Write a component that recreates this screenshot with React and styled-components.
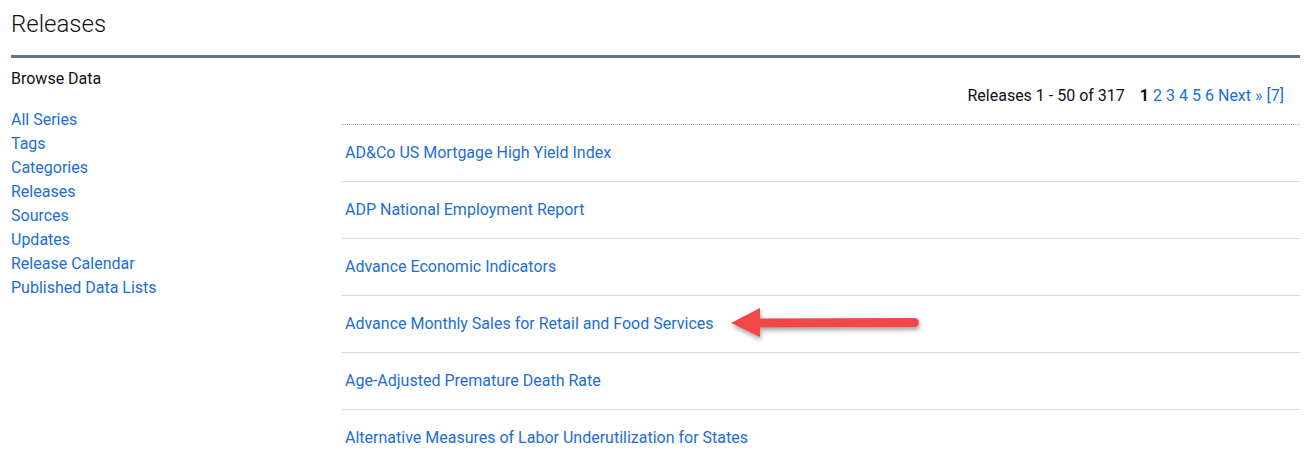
import React from "react";
import styled, { createGlobalStyle } from "styled-components";

const Global = createGlobalStyle`
  html, body { margin: 0; padding: 0; background: #fff; }
  body { font-family: Roboto, "Liberation Sans", Arial, sans-serif; color: #111; }
  a { color: #1c6ed6; text-decoration: none; }
`;

const Page = styled.div`
  padding: 0 7px 0 11px;
  position: relative;
`;

const Title = styled.h1`
  margin: 0;
  padding-top: 10px;
  height: 55px;
  box-sizing: border-box;
  font-size: 24px;
  font-weight: 300;
  line-height: 28px;
  color: #111;
`;

const Rule = styled.div`
  height: 3px;
  background: #5b7a90;
`;

const Body = styled.div`
  display: grid;
  grid-template-columns: 330px 1fr;
`;

const Sidebar = styled.nav`
  display: flex;
  flex-direction: column;
  padding-top: 12px;
`;

const SideHeading = styled.div`
  font-size: 16px;
  line-height: 18px;
  color: #111;
  margin-bottom: 20px;
`;

const SideLink = styled.a`
  font-size: 16px;
  line-height: 24px;
`;

const Main = styled.div`
  display: flex;
  flex-direction: column;
`;

const Pager = styled.div`
  display: flex;
  justify-content: flex-end;
  align-items: flex-start;
  gap: 4px;
  padding: 26px 16px 0 0;
  height: 67px;
  box-sizing: border-box;
  border-bottom: 1px dotted #aaa;
  font-size: 16px;
  line-height: 24px;
`;

const Count = styled.span`
  margin-right: 11px;
`;

const Current = styled.b`
  font-weight: 700;
`;

const Row = styled.div`
  height: 57px;
  box-sizing: border-box;
  display: flex;
  align-items: center;
  padding: 0 0 2px 4px;
  border-bottom: ${(p) => (p.$last ? "none" : "1px solid #ddd")};
  font-size: 16px;
`;

const Arrow = styled.svg`
  position: absolute;
  left: 720px;
  top: 300px;
  overflow: visible;
`;

const sideLinks = [
  "All Series",
  "Tags",
  "Categories",
  "Releases",
  "Sources",
  "Updates",
  "Release Calendar",
  "Published Data Lists",
];

const releases = [
  "AD&Co US Mortgage High Yield Index",
  "ADP National Employment Report",
  "Advance Economic Indicators",
  "Advance Monthly Sales for Retail and Food Services",
  "Age-Adjusted Premature Death Rate",
  "Alternative Measures of Labor Underutilization for States",
];

export default function App() {
  return (
    <>
      <Global />
      <Page>
        <Title>Releases</Title>
        <Rule />
        <Body>
          <Sidebar>
            <SideHeading>Browse Data</SideHeading>
            {sideLinks.map((l) => (
              <SideLink key={l} href="#">
                {l}
              </SideLink>
            ))}
          </Sidebar>
          <Main>
            <Pager>
              <Count>Releases 1 - 50 of 317</Count>
              <Current>1</Current>
              <a href="#">2</a>
              <a href="#">3</a>
              <a href="#">4</a>
              <a href="#">5</a>
              <a href="#">6</a>
              <a href="#">Next »</a>
              <a href="#">[7]</a>
            </Pager>
            {releases.map((r, i) => (
              <Row key={r} $last={i === releases.length - 1}>
                <a href="#">{r}</a>
              </Row>
            ))}
          </Main>
        </Body>
        <Arrow width="210" height="50" viewBox="0 0 210 50">
          <defs>
            <filter id="sh" x="-20%" y="-50%" width="140%" height="200%">
              <feDropShadow dx="1" dy="3" stdDeviation="2" floodColor="#000" floodOpacity="0.35" />
            </filter>
          </defs>
          <g filter="url(#sh)">
            <line x1="40" y1="23" x2="194.5" y2="22.5" stroke="#f24646" strokeWidth="9" strokeLinecap="round" />
            <polygon points="11,23 40,8 40,37" fill="#f24646" />
          </g>
        </Arrow>
      </Page>
    </>
  );
}
